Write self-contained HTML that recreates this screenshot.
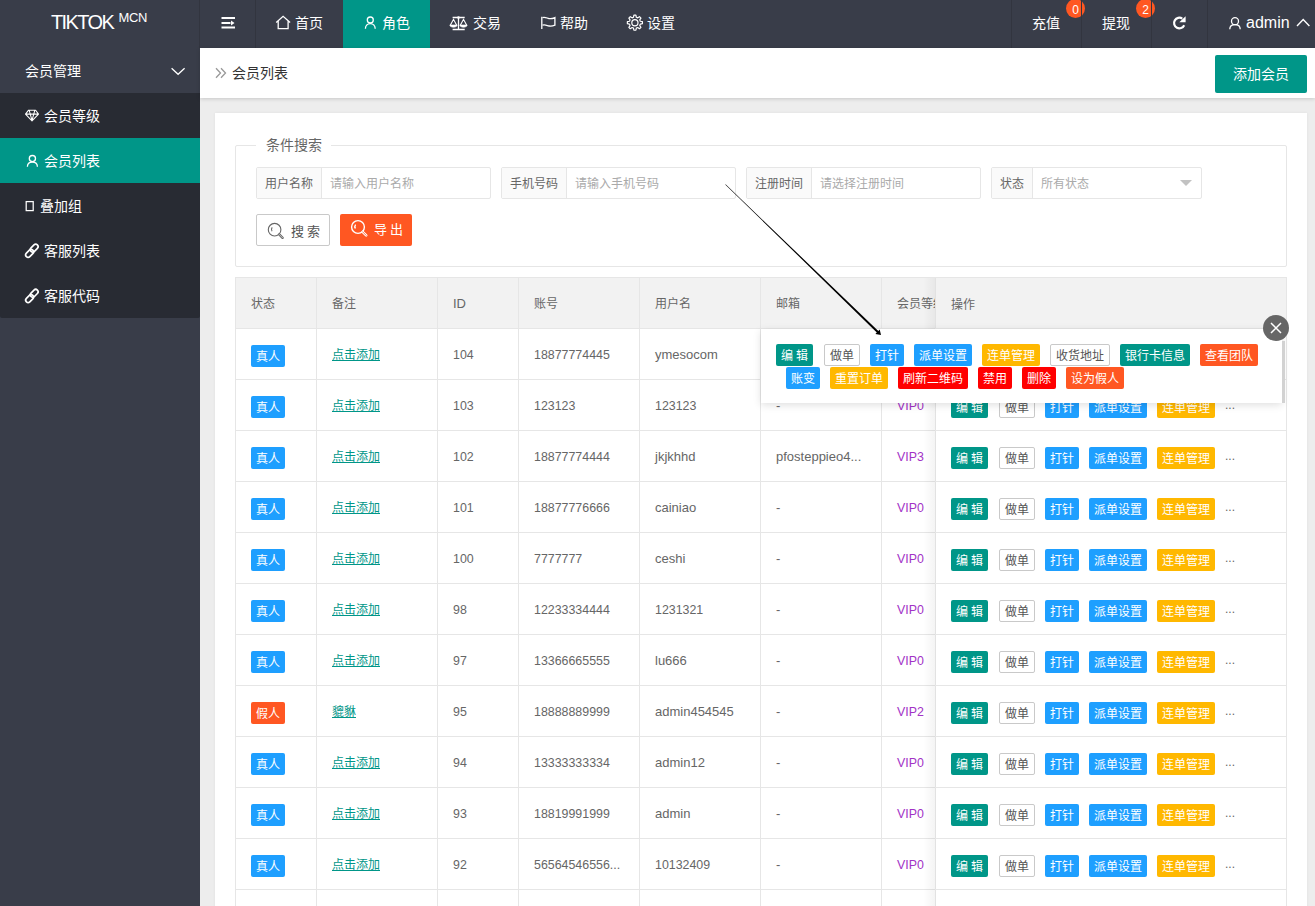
<!DOCTYPE html>
<html lang="zh-CN">
<head>
<meta charset="utf-8">
<style>
*{margin:0;padding:0;box-sizing:border-box;}
html,body{width:1315px;height:906px;overflow:hidden;background:#EDEDED;font-family:"Liberation Sans",sans-serif;color:#666;font-size:14px;}
.abs{position:absolute;}
#hdr{position:absolute;left:0;top:0;width:1315px;height:48px;background:#393D49;}
#logo{position:absolute;left:0;top:0;width:200px;height:48px;color:#fff;}
.sep{position:absolute;top:0;width:1px;height:48px;background:#32353f;}
.nav{position:absolute;top:0;height:48px;line-height:46px;color:#fff;font-size:14px;white-space:nowrap;}
#side{position:absolute;left:0;top:48px;width:200px;height:858px;background:#393D49;}
#sub{position:absolute;left:0;top:93px;width:200px;height:225px;background:#282B33;border-radius:0 0 2px 2px;}
.si{position:absolute;left:0;width:200px;height:45px;line-height:47px;color:#fff;font-size:14px;}
#crumb{position:absolute;left:200px;top:48px;width:1115px;height:50px;background:#fff;box-shadow:0 1px 4px rgba(0,0,0,.16);}
#card{position:absolute;left:215px;top:113px;width:1092px;height:800px;background:#fff;box-shadow:0 0 3px rgba(0,0,0,.06);}
.ig{position:absolute;top:167px;height:32px;border:1px solid #e6e6e6;border-radius:2px;background:#fff;}
.ig .lb{position:absolute;left:0;top:0;height:30px;line-height:32px;background:#FAFAFA;border-right:1px solid #e6e6e6;color:#666;font-size:12px;padding-left:8px;}
.ig .ph{position:absolute;top:0;height:30px;line-height:32px;color:#aaa;font-size:12px;}
.btn{position:absolute;height:22px;line-height:24px;font-size:12px;color:#fff;border-radius:2px;padding:0 5px;white-space:nowrap;}
.g{background:#009688}.b{background:#1E9FFF}.y{background:#FFB800}.o{background:#FF5722}.r{background:#FF0000}
.w{background:#fff;border:1px solid #C9C9C9;color:#555;line-height:22px;}
#tbl{position:absolute;left:235px;top:277px;width:1052px;height:640px;border:1px solid #e6e6e6;border-right:0;}
.hl{position:absolute;height:1px;background:#e6e6e6;}
.vl{position:absolute;width:1px;background:#e6e6e6;}
.c{position:absolute;font-size:13px;color:#666;white-space:nowrap;line-height:16px;}
.z{font-size:12px;}
.legend{font-size:14px;color:#666;}
.sbtn{border:1px solid #C9C9C9;border-radius:2px;background:#fff;}
.ebtn{background:#FF5722;border-radius:2px;}
.lk{color:#009688;text-decoration:underline;}
.vip{color:#a233c6;}
.dots{font-size:12px;color:#666;line-height:22px;}
#fix{position:absolute;left:935px;top:277px;width:351px;height:640px;background:#fff;overflow:hidden;}
#pop{position:absolute;left:761px;top:329px;width:521px;height:74px;background:#fff;box-shadow:0 2px 8px rgba(0,0,0,.13);}
#pclose{position:absolute;left:1263px;top:315px;width:26px;height:26px;border-radius:50%;background:#666;}
.badge{position:absolute;top:-1px;width:19px;height:19px;border-radius:50%;background:#FF5722;color:#fff;font-size:12px;line-height:22px;text-align:center;}

.num{font-size:12.4px;}

</style>
</head>
<body>
<div id="hdr">
  <span class="abs" style="left:51px;top:11px;font-size:20px;color:#fff;letter-spacing:-1.6px;white-space:nowrap">TIKTOK</span>
  <span class="abs" style="left:118.5px;top:10px;font-size:13px;color:#fff;letter-spacing:-0.3px">MCN</span>
  <div class="sep" style="left:199px"></div>
  <div class="sep" style="left:255px"></div>
  <div class="abs" style="left:343px;top:0;width:87px;height:48px;background:#009688"></div>
  <div class="nav" style="left:295px">首页</div>
  <div class="nav" style="left:382px">角色</div>
  <div class="nav" style="left:473px">交易</div>
  <div class="nav" style="left:560px">帮助</div>
  <div class="nav" style="left:647px">设置</div>
  <div class="nav" style="left:1032px">充值</div>
  <div class="nav" style="left:1102px">提现</div>
  <div class="badge" style="left:1066px">0</div>
  <div class="badge" style="left:1136px">2</div>
  <div class="sep" style="left:1011px"></div>
  <div class="sep" style="left:1081px"></div>
  <div class="sep" style="left:1151px"></div>
  <div class="sep" style="left:1207px"></div>
  <div class="nav" style="left:1246px;font-size:16px;">admin</div>
</div>
<div id="side">
  <div class="si" style="top:0"><span class="abs" style="left:25px">会员管理</span></div>
</div>
<div id="sub">
  <div class="si" style="top:0"><span class="abs" style="left:44px">会员等级</span></div>
  <div class="si" style="top:45px;background:#009688"><span class="abs" style="left:44px">会员列表</span></div>
  <div class="si" style="top:90px"><span class="abs" style="left:40px">叠加组</span></div>
  <div class="si" style="top:135px"><span class="abs" style="left:44px">客服列表</span></div>
  <div class="si" style="top:180px"><span class="abs" style="left:44px">客服代码</span></div>
</div>
<svg class="abs" style="left:0;top:0" width="1315" height="320" fill="none" stroke="#fff">
  <!-- menu -->
  <path d="M221.5 18H235M221.5 23H230.5M221.5 27.5H235" stroke-width="2"/>
  <path d="M231 20.5L234.5 23L231 25.5Z" fill="#fff" stroke="none"/>
  <!-- house -->
  <path d="M276.2 22.6L283.1 16.3L290.1 22.6M278.2 21V28.6H288.1V21" stroke-width="1.3"/>
  <!-- user -->
  <circle cx="370.3" cy="20" r="3" stroke-width="1.3"/>
  <path d="M365.4 28.8C365.4 25.6 367.6 23.6 370.3 23.6C373 23.6 375.2 25.6 375.2 28.8" stroke-width="1.3"/>
  <!-- scale -->
  <path d="M452.6 17.5H464.7M458.5 17V29.3M452.6 29.5H464.7" stroke-width="1.3"/>
  <circle cx="458.5" cy="17.5" r="1.3" fill="#fff" stroke="none"/>
  <path d="M450.3 25.2L453.5 19.3L456.7 25.2M460.3 25.2L463.5 19.3L466.7 25.2" stroke-width="1.1"/>
  <path d="M449.8 25H457.2C457.2 26.3 455.7 27.2 453.5 27.2C451.3 27.2 449.8 26.3 449.8 25ZM459.8 25H467.2C467.2 26.3 465.7 27.2 463.5 27.2C461.3 27.2 459.8 26.3 459.8 25Z" fill="#fff" stroke="#fff" stroke-width="0.6"/>
  <!-- flag -->
  <path d="M541.8 16.8V29" stroke-width="1.3"/>
  <path d="M542.5 17.6C545 16.6 547 18.2 549 18.6C551 19 553 18.4 554.9 17.6V25.2C553 26 551 26.4 549 26C547 25.6 545 24.3 542.5 25.2" stroke-width="1.3"/>
  <!-- gear -->
  <path d="M642.43 21.69 L642.43 23.71 L640.31 24.14 L639.74 25.51 L640.94 27.31 L639.51 28.74 L637.71 27.54 L636.34 28.11 L635.91 30.23 L633.89 30.23 L633.46 28.11 L632.09 27.54 L630.29 28.74 L628.86 27.31 L630.06 25.51 L629.49 24.14 L627.37 23.71 L627.37 21.69 L629.49 21.26 L630.06 19.89 L628.86 18.09 L630.29 16.66 L632.09 17.86 L633.46 17.29 L633.89 15.17 L635.91 15.17 L636.34 17.29 L637.71 17.86 L639.51 16.66 L640.94 18.09 L639.74 19.89 L640.31 21.26Z" stroke-linejoin="round" stroke-width="1.2"/>
  <circle cx="634.9" cy="22.7" r="3.1" stroke-width="1.2"/>
  <!-- refresh -->
  <path d="M1184.2 25.2A5.3 5.3 0 1 1 1182.3 18.6" stroke-width="2.2"/>
  <path d="M1179.3 22.2L1185.6 16.3V22.2Z" fill="#fff" stroke="none"/>
  <!-- user2 -->
  <circle cx="1235" cy="21.2" r="3.5" stroke-width="1.3"/>
  <path d="M1229.8 29.3C1229.8 26.2 1232 24.7 1235 24.7C1238 24.7 1240.2 26.2 1240.2 29.3" stroke-width="1.3"/>
  <!-- caret up -->
  <path d="M1297 26L1303.2 19.6L1309.4 26" stroke-width="1.4"/>
  <!-- sidebar chevron -->
  <path d="M171.6 68.3L178.1 74.3L184.6 68.3" stroke-width="1.3"/>
  <!-- diamond -->
  <path d="M28.6 110.2H35.6L38.5 114.1L32 120.9L25.5 114.1Z M25.8 114.1H38.2 M29.2 110.4L32 120.4L34.8 110.4" stroke-width="1.05" stroke-linejoin="round"/>
  <!-- user sidebar -->
  <circle cx="32.4" cy="158.6" r="3.1" stroke-width="1.3"/>
  <path d="M27.4 166.8C27.4 163.8 29.5 162.2 32.4 162.2C35.3 162.2 37.4 163.8 37.4 166.8" stroke-width="1.3"/>
  <!-- rect -->
  <rect x="26.2" y="201.6" width="7" height="9" stroke-width="1.25"/>
  <!-- link icons -->
  <g id="lnk" stroke-width="1.7" transform="translate(0 0)">
    <rect x="25.1" y="251" width="9" height="4.8" rx="2.4" transform="rotate(-45 29.6 253.4)"/>
    <rect x="29.7" y="245.7" width="9" height="4.8" rx="2.4" transform="rotate(-45 34.2 248.1)"/>
  </g>
<g stroke-width="1.7" transform="translate(0 45.2)">
    <rect x="25.1" y="251" width="9" height="4.8" rx="2.4" transform="rotate(-45 29.6 253.4)"/>
    <rect x="29.7" y="245.7" width="9" height="4.8" rx="2.4" transform="rotate(-45 34.2 248.1)"/>
  </g>
</svg>
<div id="crumb">
  <svg class="abs" style="left:14px;top:19px" width="14" height="12" fill="none" stroke="#999" stroke-width="1.3"><path d="M2 1.2L6.5 6L2 10.8M7 1.2L11.5 6L7 10.8"/></svg>
  <span class="abs" style="left:32px;top:14px;color:#333;font-size:14px;">会员列表</span>
  <div class="abs" style="left:1015px;top:7px;width:92px;height:38px;background:#009688;border-radius:2px;color:#fff;font-size:14px;line-height:38px;text-align:center;">添加会员</div>
</div>

<div id="card"></div>
<div class="abs" style="left:235px;top:145px;width:1052px;height:122px;border:1px solid #e6e6e6;border-radius:2px"></div>
<div class="abs" style="left:256px;top:136px;width:75px;height:18px;background:#fff"></div>
<div class="abs legend" style="left:266px;top:134px">条件搜索</div>
<div class="ig" style="left:256px;width:235px"><div class="lb" style="width:65px">用户名称</div><div class="ph" style="left:73px">请输入用户名称</div></div>
<div class="ig" style="left:501px;width:235px"><div class="lb" style="width:65px">手机号码</div><div class="ph" style="left:73px">请输入手机号码</div></div>
<div class="ig" style="left:746px;width:235px"><div class="lb" style="width:65px">注册时间</div><div class="ph" style="left:73px">请选择注册时间</div></div>
<div class="ig" style="left:991px;width:211px"><div class="lb" style="width:41px">状态</div><div class="ph" style="left:49px">所有状态</div></div>
<div class="abs" style="left:1180px;top:180px;width:0;height:0;border-left:6px solid transparent;border-right:6px solid transparent;border-top:6px solid #c2c2c2"></div>
<div class="abs sbtn" style="left:256px;top:214px;width:74px;height:32px"><svg class="abs" style="left:9px;top:4.5px" width="20" height="20" fill="none" stroke="#666" stroke-width="1.1"><circle cx="8.6" cy="9.7" r="6.3"/><path d="M6.2 7.3C5.4 8.3 5.3 10 6 11.2"/><path d="M13.2 14.4L16.6 17.8" stroke-width="2.4" stroke-linecap="round"/><path d="M13.2 14.4L16.6 17.8" stroke="#fff" stroke-width="0.6" stroke-linecap="round"/></svg><span class="abs" style="left:34px;top:6px;font-size:13px;color:#555;letter-spacing:3px">搜索</span></div>
<div class="abs ebtn" style="left:340px;top:214px;width:72px;height:32px"><svg class="abs" style="left:10px;top:5px" width="20" height="20" fill="none" stroke="#fff" stroke-width="1.4"><circle cx="8" cy="8" r="6.4"/><path d="M5.6 5.6C4.8 6.6 4.7 8.3 5.4 9.5"/><path d="M12.6 12.8L16.2 16.4" stroke-width="2.6" stroke-linecap="round"/><path d="M12.6 12.8L16.2 16.4" stroke="#FF5722" stroke-width="0.8" stroke-linecap="round"/></svg><span class="abs" style="left:34px;top:5px;font-size:13px;color:#fff;letter-spacing:3px">导出</span></div>
<div class="abs" style="left:236px;top:278px;width:1050px;height:50px;background:#F2F2F2"></div>
<div class="hl" style="left:235px;top:277px;width:1052px"></div>
<div class="hl" style="left:235px;top:328px;width:1052px"></div>
<div class="hl" style="left:235px;top:379px;width:1052px"></div>
<div class="hl" style="left:235px;top:430px;width:1052px"></div>
<div class="hl" style="left:235px;top:481px;width:1052px"></div>
<div class="hl" style="left:235px;top:532px;width:1052px"></div>
<div class="hl" style="left:235px;top:583px;width:1052px"></div>
<div class="hl" style="left:235px;top:634px;width:1052px"></div>
<div class="hl" style="left:235px;top:685px;width:1052px"></div>
<div class="hl" style="left:235px;top:736px;width:1052px"></div>
<div class="hl" style="left:235px;top:787px;width:1052px"></div>
<div class="hl" style="left:235px;top:838px;width:1052px"></div>
<div class="hl" style="left:235px;top:889px;width:1052px"></div>
<div class="vl" style="left:235px;top:277px;height:640px"></div>
<div class="vl" style="left:316px;top:277px;height:640px"></div>
<div class="vl" style="left:437px;top:277px;height:640px"></div>
<div class="vl" style="left:518px;top:277px;height:640px"></div>
<div class="vl" style="left:639px;top:277px;height:640px"></div>
<div class="vl" style="left:760px;top:277px;height:640px"></div>
<div class="vl" style="left:881px;top:277px;height:640px"></div>
<div class="vl" style="left:1286px;top:277px;height:640px"></div>
<div class="c z" style="left:251px;top:296px">状态</div>
<div class="c z" style="left:332px;top:296px">备注</div>
<div class="c" style="left:453px;top:296px">ID</div>
<div class="c z" style="left:534px;top:296px">账号</div>
<div class="c z" style="left:655px;top:296px">用户名</div>
<div class="c z" style="left:776px;top:296px">邮箱</div>
<div class="c z" style="left:897px;top:296px">会员等级</div>
<div class="btn b" style="left:251px;top:345px">真人</div>
<div class="c z lk" style="left:332px;top:347px">点击添加</div>
<div class="c num" style="left:453px;top:347px">104</div>
<div class="c num" style="left:534px;top:347px">18877774445</div>
<div class="c" style="left:655px;top:347px">ymesocom</div>
<div class="c" style="left:776px;top:347px">-</div>
<div class="c vip num" style="left:897px;top:347px">VIP0</div>
<div class="btn b" style="left:251px;top:396px">真人</div>
<div class="c z lk" style="left:332px;top:398px">点击添加</div>
<div class="c num" style="left:453px;top:398px">103</div>
<div class="c num" style="left:534px;top:398px">123123</div>
<div class="c num" style="left:655px;top:398px">123123</div>
<div class="c" style="left:776px;top:398px">-</div>
<div class="c vip num" style="left:897px;top:398px">VIP0</div>
<div class="btn b" style="left:251px;top:447px">真人</div>
<div class="c z lk" style="left:332px;top:449px">点击添加</div>
<div class="c num" style="left:453px;top:449px">102</div>
<div class="c num" style="left:534px;top:449px">18877774444</div>
<div class="c" style="left:655px;top:449px">jkjkhhd</div>
<div class="c" style="left:776px;top:449px">pfosteppieo4...</div>
<div class="c vip num" style="left:897px;top:449px">VIP3</div>
<div class="btn b" style="left:251px;top:498px">真人</div>
<div class="c z lk" style="left:332px;top:500px">点击添加</div>
<div class="c num" style="left:453px;top:500px">101</div>
<div class="c num" style="left:534px;top:500px">18877776666</div>
<div class="c" style="left:655px;top:500px">cainiao</div>
<div class="c" style="left:776px;top:500px">-</div>
<div class="c vip num" style="left:897px;top:500px">VIP0</div>
<div class="btn b" style="left:251px;top:549px">真人</div>
<div class="c z lk" style="left:332px;top:551px">点击添加</div>
<div class="c num" style="left:453px;top:551px">100</div>
<div class="c num" style="left:534px;top:551px">7777777</div>
<div class="c" style="left:655px;top:551px">ceshi</div>
<div class="c" style="left:776px;top:551px">-</div>
<div class="c vip num" style="left:897px;top:551px">VIP0</div>
<div class="btn b" style="left:251px;top:600px">真人</div>
<div class="c z lk" style="left:332px;top:602px">点击添加</div>
<div class="c num" style="left:453px;top:602px">98</div>
<div class="c num" style="left:534px;top:602px">12233334444</div>
<div class="c num" style="left:655px;top:602px">1231321</div>
<div class="c" style="left:776px;top:602px">-</div>
<div class="c vip num" style="left:897px;top:602px">VIP0</div>
<div class="btn b" style="left:251px;top:651px">真人</div>
<div class="c z lk" style="left:332px;top:653px">点击添加</div>
<div class="c num" style="left:453px;top:653px">97</div>
<div class="c num" style="left:534px;top:653px">13366665555</div>
<div class="c" style="left:655px;top:653px">lu666</div>
<div class="c" style="left:776px;top:653px">-</div>
<div class="c vip num" style="left:897px;top:653px">VIP0</div>
<div class="btn o" style="left:251px;top:702px">假人</div>
<div class="c z lk" style="left:332px;top:704px">貔貅</div>
<div class="c num" style="left:453px;top:704px">95</div>
<div class="c num" style="left:534px;top:704px">18888889999</div>
<div class="c" style="left:655px;top:704px">admin454545</div>
<div class="c" style="left:776px;top:704px">-</div>
<div class="c vip num" style="left:897px;top:704px">VIP2</div>
<div class="btn b" style="left:251px;top:753px">真人</div>
<div class="c z lk" style="left:332px;top:755px">点击添加</div>
<div class="c num" style="left:453px;top:755px">94</div>
<div class="c num" style="left:534px;top:755px">13333333334</div>
<div class="c" style="left:655px;top:755px">admin12</div>
<div class="c" style="left:776px;top:755px">-</div>
<div class="c vip num" style="left:897px;top:755px">VIP0</div>
<div class="btn b" style="left:251px;top:804px">真人</div>
<div class="c z lk" style="left:332px;top:806px">点击添加</div>
<div class="c num" style="left:453px;top:806px">93</div>
<div class="c num" style="left:534px;top:806px">18819991999</div>
<div class="c" style="left:655px;top:806px">admin</div>
<div class="c" style="left:776px;top:806px">-</div>
<div class="c vip num" style="left:897px;top:806px">VIP0</div>
<div class="btn b" style="left:251px;top:855px">真人</div>
<div class="c z lk" style="left:332px;top:857px">点击添加</div>
<div class="c num" style="left:453px;top:857px">92</div>
<div class="c num" style="left:534px;top:857px">56564546556...</div>
<div class="c num" style="left:655px;top:857px">10132409</div>
<div class="c" style="left:776px;top:857px">-</div>
<div class="c vip num" style="left:897px;top:857px">VIP0</div>
<div class="btn b" style="left:251px;top:906px">真人</div>
<div class="c z lk" style="left:332px;top:908px">点击添加</div>
<div class="c num" style="left:453px;top:908px">91</div>
<div class="c num" style="left:534px;top:908px">18888888888</div>
<div class="c" style="left:655px;top:908px">test</div>
<div class="c" style="left:776px;top:908px">-</div>
<div class="c vip num" style="left:897px;top:908px">VIP0</div>
<div class="abs" style="left:923px;top:278px;width:12px;height:640px;background:linear-gradient(to right,rgba(0,0,0,0),rgba(0,0,0,.045))"></div>
<div id="fix">
<div class="abs" style="left:0;top:1px;width:351px;height:50px;background:#F2F2F2"></div>
<div class="vl" style="left:0;top:0;height:640px;background:#e2e2e2"></div>
<div class="c z" style="left:16px;top:20px">操作</div>
<div class="hl" style="left:0;top:51px;width:351px"></div>
<div class="hl" style="left:0;top:102px;width:351px"></div>
<div class="hl" style="left:0;top:153px;width:351px"></div>
<div class="hl" style="left:0;top:204px;width:351px"></div>
<div class="hl" style="left:0;top:255px;width:351px"></div>
<div class="hl" style="left:0;top:306px;width:351px"></div>
<div class="hl" style="left:0;top:357px;width:351px"></div>
<div class="hl" style="left:0;top:408px;width:351px"></div>
<div class="hl" style="left:0;top:459px;width:351px"></div>
<div class="hl" style="left:0;top:510px;width:351px"></div>
<div class="hl" style="left:0;top:561px;width:351px"></div>
<div class="hl" style="left:0;top:612px;width:351px"></div>
<div class="hl" style="left:0;top:663px;width:351px"></div>
<div class="hl" style="left:0;top:0;width:351px"></div>
<div class="btn g" style="left:16px;top:68px">编 辑</div>
<div class="btn w" style="left:64px;top:68px">做单</div>
<div class="btn b" style="left:110px;top:68px">打针</div>
<div class="btn b" style="left:154px;top:68px">派单设置</div>
<div class="btn y" style="left:222px;top:68px">连单管理</div>
<div class="abs dots" style="left:290px;top:66px">...</div>
<div class="btn g" style="left:16px;top:119px">编 辑</div>
<div class="btn w" style="left:64px;top:119px">做单</div>
<div class="btn b" style="left:110px;top:119px">打针</div>
<div class="btn b" style="left:154px;top:119px">派单设置</div>
<div class="btn y" style="left:222px;top:119px">连单管理</div>
<div class="abs dots" style="left:290px;top:117px">...</div>
<div class="btn g" style="left:16px;top:170px">编 辑</div>
<div class="btn w" style="left:64px;top:170px">做单</div>
<div class="btn b" style="left:110px;top:170px">打针</div>
<div class="btn b" style="left:154px;top:170px">派单设置</div>
<div class="btn y" style="left:222px;top:170px">连单管理</div>
<div class="abs dots" style="left:290px;top:168px">...</div>
<div class="btn g" style="left:16px;top:221px">编 辑</div>
<div class="btn w" style="left:64px;top:221px">做单</div>
<div class="btn b" style="left:110px;top:221px">打针</div>
<div class="btn b" style="left:154px;top:221px">派单设置</div>
<div class="btn y" style="left:222px;top:221px">连单管理</div>
<div class="abs dots" style="left:290px;top:219px">...</div>
<div class="btn g" style="left:16px;top:272px">编 辑</div>
<div class="btn w" style="left:64px;top:272px">做单</div>
<div class="btn b" style="left:110px;top:272px">打针</div>
<div class="btn b" style="left:154px;top:272px">派单设置</div>
<div class="btn y" style="left:222px;top:272px">连单管理</div>
<div class="abs dots" style="left:290px;top:270px">...</div>
<div class="btn g" style="left:16px;top:323px">编 辑</div>
<div class="btn w" style="left:64px;top:323px">做单</div>
<div class="btn b" style="left:110px;top:323px">打针</div>
<div class="btn b" style="left:154px;top:323px">派单设置</div>
<div class="btn y" style="left:222px;top:323px">连单管理</div>
<div class="abs dots" style="left:290px;top:321px">...</div>
<div class="btn g" style="left:16px;top:374px">编 辑</div>
<div class="btn w" style="left:64px;top:374px">做单</div>
<div class="btn b" style="left:110px;top:374px">打针</div>
<div class="btn b" style="left:154px;top:374px">派单设置</div>
<div class="btn y" style="left:222px;top:374px">连单管理</div>
<div class="abs dots" style="left:290px;top:372px">...</div>
<div class="btn g" style="left:16px;top:425px">编 辑</div>
<div class="btn w" style="left:64px;top:425px">做单</div>
<div class="btn b" style="left:110px;top:425px">打针</div>
<div class="btn b" style="left:154px;top:425px">派单设置</div>
<div class="btn y" style="left:222px;top:425px">连单管理</div>
<div class="abs dots" style="left:290px;top:423px">...</div>
<div class="btn g" style="left:16px;top:476px">编 辑</div>
<div class="btn w" style="left:64px;top:476px">做单</div>
<div class="btn b" style="left:110px;top:476px">打针</div>
<div class="btn b" style="left:154px;top:476px">派单设置</div>
<div class="btn y" style="left:222px;top:476px">连单管理</div>
<div class="abs dots" style="left:290px;top:474px">...</div>
<div class="btn g" style="left:16px;top:527px">编 辑</div>
<div class="btn w" style="left:64px;top:527px">做单</div>
<div class="btn b" style="left:110px;top:527px">打针</div>
<div class="btn b" style="left:154px;top:527px">派单设置</div>
<div class="btn y" style="left:222px;top:527px">连单管理</div>
<div class="abs dots" style="left:290px;top:525px">...</div>
<div class="btn g" style="left:16px;top:578px">编 辑</div>
<div class="btn w" style="left:64px;top:578px">做单</div>
<div class="btn b" style="left:110px;top:578px">打针</div>
<div class="btn b" style="left:154px;top:578px">派单设置</div>
<div class="btn y" style="left:222px;top:578px">连单管理</div>
<div class="abs dots" style="left:290px;top:576px">...</div>
<div class="btn g" style="left:16px;top:629px">编 辑</div>
<div class="btn w" style="left:64px;top:629px">做单</div>
<div class="btn b" style="left:110px;top:629px">打针</div>
<div class="btn b" style="left:154px;top:629px">派单设置</div>
<div class="btn y" style="left:222px;top:629px">连单管理</div>
<div class="abs dots" style="left:290px;top:627px">...</div>
</div>
<div id="pop">
<div class="btn g" style="left:15px;top:15px">编 辑</div>
<div class="btn w" style="left:63px;top:15px">做单</div>
<div class="btn b" style="left:109px;top:15px">打针</div>
<div class="btn b" style="left:153px;top:15px">派单设置</div>
<div class="btn y" style="left:221px;top:15px">连单管理</div>
<div class="btn w" style="left:289px;top:15px">收货地址</div>
<div class="btn g" style="left:359px;top:15px">银行卡信息</div>
<div class="btn o" style="left:439px;top:15px">查看团队</div>
<div class="btn b" style="left:25px;top:38px">账变</div>
<div class="btn y" style="left:69px;top:38px">重置订单</div>
<div class="btn r" style="left:137px;top:38px">刷新二维码</div>
<div class="btn r" style="left:217px;top:38px">禁用</div>
<div class="btn r" style="left:261px;top:38px">删除</div>
<div class="btn o" style="left:305px;top:38px">设为假人</div>
<div class="abs" style="left:521px;top:12px;width:3px;height:62px;background:#d2d2d2"></div>
</div>
<div id="pclose"><svg class="abs" style="left:0;top:0" width="26" height="26" stroke="#fff" stroke-width="1.5"><path d="M8 8L18 18M18 8L8 18"/></svg></div>
<svg class="abs" style="left:0;top:0" width="1315" height="906"><polygon points="725.6,184.3 878.3,330.9 879.7,329.4 881,335 875.4,333.9 876.8,332.4 725.4,184.7" fill="#000"/></svg>
</body>
</html>
